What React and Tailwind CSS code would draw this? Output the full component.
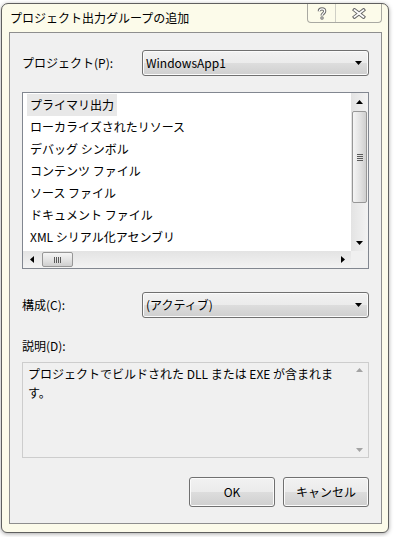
import React from "react";

const font = { fontFamily: '"Noto Sans CJK JP", "Noto Sans", sans-serif' };

function Arrow({ dir = "down", color = "#000" }) {
  const pts = {
    down: "0,0 7,0 3.5,4",
    up: "0,4 7,4 3.5,0",
    left: "4,0 4,7 0,3.5",
    right: "0,0 0,7 4,3.5",
  }[dir];
  const vertical = dir === "up" || dir === "down";
  return (
    <svg width={vertical ? 7 : 4} height={vertical ? 4 : 7} aria-hidden="true">
      <polygon points={pts} fill={color} />
    </svg>
  );
}

function Combo({ value }) {
  return (
    <div className="flex-1 h-[26px] flex items-center justify-between pl-[3px] pr-[6px] rounded-[3px] border border-[#707070] bg-[linear-gradient(to_bottom,#f2f2f2_0%,#ebebeb_50%,#dddddd_50%,#cfcfcf_100%)] shadow-[inset_0_0_0_1px_#fbfbfb]">
      <span className="text-[12px] leading-none text-black">{value}</span>
      <Arrow dir="down" />
    </div>
  );
}

function Button({ children }) {
  return (
    <div className="w-[86px] h-[30px] flex items-center justify-center rounded-[3px] border border-[#707070] bg-[linear-gradient(to_bottom,#f2f2f2_0%,#ebebeb_50%,#dddddd_50%,#cfcfcf_100%)] shadow-[inset_0_0_0_1px_#fbfbfb] text-[12px] text-black">
      {children}
    </div>
  );
}

const items = [
  "プライマリ出力",
  "ローカライズされたリソース",
  "デバッグ シンボル",
  "コンテンツ ファイル",
  "ソース ファイル",
  "ドキュメント ファイル",
  "XML シリアル化アセンブリ",
];

function Grip({ vertical }) {
  return vertical ? (
    <div className="flex flex-col gap-[1px]">
      <div className="w-[6px] h-[1px] bg-[#5a5a5a]" />
      <div className="w-[6px] h-[1px] bg-[#5a5a5a]" />
      <div className="w-[6px] h-[1px] bg-[#5a5a5a]" />
      <div className="w-[6px] h-[1px] bg-[#5a5a5a]" />
    </div>
  ) : (
    <div className="flex gap-[1px]">
      <div className="w-[1px] h-[6px] bg-[#5a5a5a]" />
      <div className="w-[1px] h-[6px] bg-[#5a5a5a]" />
      <div className="w-[1px] h-[6px] bg-[#5a5a5a]" />
      <div className="w-[1px] h-[6px] bg-[#5a5a5a]" />
    </div>
  );
}

export default function App() {
  return (
    <div className="w-[396px] h-[537px] bg-white overflow-hidden" style={font}>
      <div className="ml-[1px] mt-[3px] w-[388px] h-[530px] flex flex-col rounded-t-[7px] rounded-b-[6px] border border-[#5f5f5f] bg-[#fcfbea] shadow-[0_1px_4px_rgba(0,0,0,0.35)] pl-[7px] pr-[6px] pb-[8px]">
        {/* title bar */}
        <div className="h-[28px] flex items-start justify-between -ml-[7px] pl-[8px]">
          <span className="text-[12px] leading-[28px] text-black">プロジェクト出力グループの追加</span>
          <div className="flex h-[19px] border-x border-b border-[#a9a9a2] rounded-b-[4px]">
            <div className="w-[27px] flex items-center justify-center">
              <svg width="10" height="13" aria-hidden="true">
                <path d="M2.3 4.2 C2.3 1.2 7.7 1.2 7.7 4.2 C7.7 6.4 5 6.4 5 8.6" fill="none" stroke="#6a6a6a" strokeWidth="3.2" />
                <circle cx="5" cy="11" r="1.7" fill="#6a6a6a" />
                <path d="M2.3 4.2 C2.3 1.2 7.7 1.2 7.7 4.2 C7.7 6.4 5 6.4 5 8.6" fill="none" stroke="#fff" strokeWidth="1.2" />
                <circle cx="5" cy="11" r="0.7" fill="#fff" />
              </svg>
            </div>
            <div className="w-[46px] flex items-center justify-center border-l border-[#cfcfc6]">
              <svg width="14" height="11" aria-hidden="true">
                <path d="M2.5 2 L11.5 9 M11.5 2 L2.5 9" fill="none" stroke="#6a6a6a" strokeWidth="3.6" strokeLinecap="square" />
                <path d="M2.5 2 L11.5 9 M11.5 2 L2.5 9" fill="none" stroke="#fff" strokeWidth="1.6" strokeLinecap="square" />
              </svg>
            </div>
          </div>
        </div>

        {/* client area */}
        <div className="flex-1 flex flex-col border border-[#8e8e8e] bg-[#f0f0f0] px-[12px] pt-[17px] text-[12px] text-black">
          <div className="h-[26px] flex items-center">
            <span className="w-[120px]">プロジェクト(P):</span>
            <Combo value="WindowsApp1" />
          </div>

          {/* list box */}
          <div className="mt-[16px] h-[177px] flex flex-col border border-[#828790] bg-white">
            <div className="flex-1 flex min-h-0">
              <div className="flex-1 pl-[4px] pt-[1px] overflow-hidden">
                {items.map((t, i) => (
                  <div key={t} className="h-[22px] flex">
                    <span className={`px-[3px] leading-[22px] whitespace-nowrap ${i === 0 ? "bg-[#e8e8e8]" : ""}`}>{t}</span>
                  </div>
                ))}
              </div>
              <div className="w-[17px] flex flex-col bg-[linear-gradient(to_right,#e3e3e3,#f3f3f3)]">
                <div className="h-[17px] flex items-center justify-center"><Arrow dir="up" /></div>
                <div className="mt-[1px] mx-[1px] h-[92px] flex items-center justify-center rounded-[2px] border border-[#979797] bg-[linear-gradient(to_right,#f5f5f5,#e2e2e2_55%,#cfcfcf)]">
                  <Grip vertical />
                </div>
                <div className="flex-1" />
                <div className="h-[17px] flex items-center justify-center"><Arrow dir="down" /></div>
              </div>
            </div>
            <div className="h-[17px] flex bg-[linear-gradient(to_bottom,#e3e3e3,#f3f3f3)]">
              <div className="w-[17px] flex items-center justify-center"><Arrow dir="left" /></div>
              <div className="ml-[2px] my-[1px] w-[31px] flex items-center justify-center rounded-[2px] border border-[#979797] bg-[linear-gradient(to_bottom,#f5f5f5,#e2e2e2_55%,#cfcfcf)]">
                <Grip />
              </div>
              <div className="flex-1" />
              <div className="w-[17px] flex items-center justify-center"><Arrow dir="right" /></div>
              <div className="w-[17px] bg-[#f0f0f0]" />
            </div>
          </div>

          <div className="mt-[23px] h-[26px] flex items-center">
            <span className="w-[120px]">構成(C):</span>
            <Combo value="(アクティブ)" />
          </div>

          <div className="mt-[20px] h-[16px] flex items-center">説明(D):</div>

          {/* description */}
          <div className="mt-[8px] h-[96px] flex border border-[#cdcdcd] bg-[#f0f0f0]">
            <div className="flex-1 pl-[5px] pt-[1px] leading-[19px]">
              プロジェクトでビルドされた DLL または EXE が含まれま
              <br />
              す。
            </div>
            <div className="w-[17px] flex flex-col justify-between py-[5px]">
              <div className="flex justify-center"><Arrow dir="up" color="#a3a3a3" /></div>
              <div className="flex justify-center"><Arrow dir="down" color="#a3a3a3" /></div>
            </div>
          </div>

          <div className="mt-[19px] flex justify-end gap-[8px]">
            <Button>OK</Button>
            <Button>キャンセル</Button>
          </div>
        </div>
      </div>
    </div>
  );
}
